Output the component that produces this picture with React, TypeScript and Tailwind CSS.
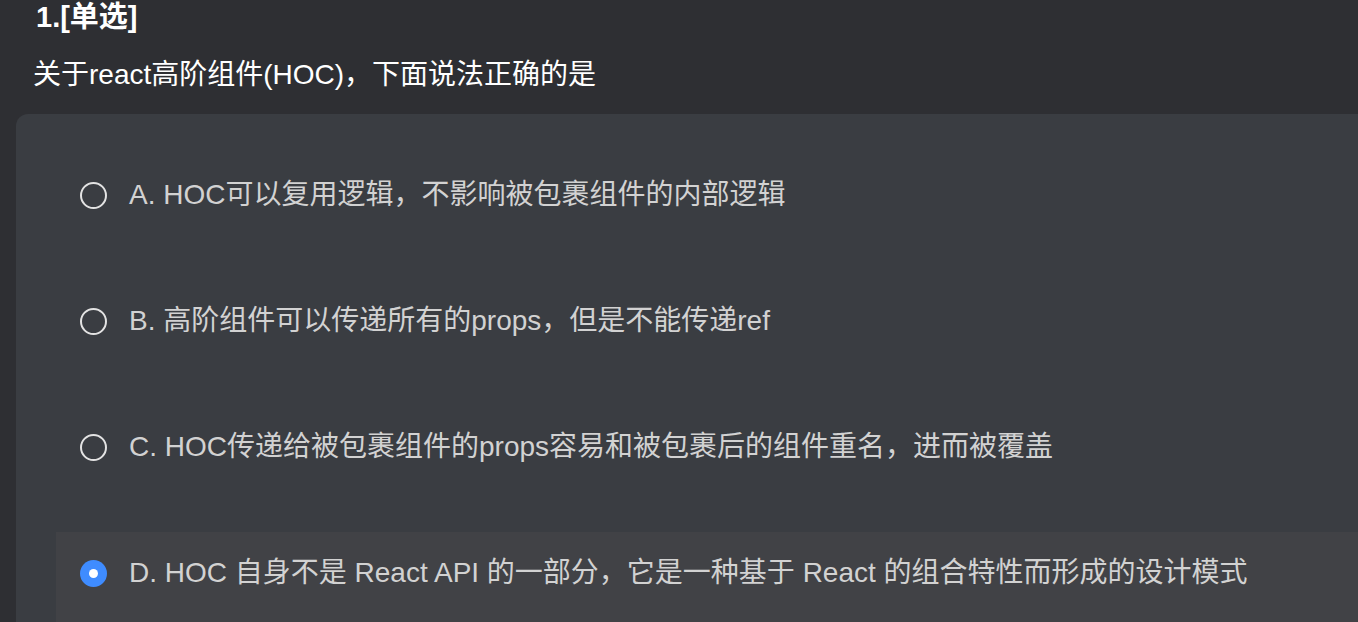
import { useState } from "react";

const options = [
  { key: "A", text: "HOC可以复用逻辑，不影响被包裹组件的内部逻辑" },
  { key: "B", text: "高阶组件可以传递所有的props，但是不能传递ref" },
  { key: "C", text: "HOC传递给被包裹组件的props容易和被包裹后的组件重名，进而被覆盖" },
  { key: "D", text: "HOC 自身不是 React API 的一部分，它是一种基于 React 的组合特性而形成的设计模式" },
];

export default function App() {
  const [picked, setPicked] = useState("D");

  return (
    <div
      className="h-[622px] w-full overflow-hidden bg-[#2e2f33] pl-4"
      style={{ fontFamily: '"Liberation Sans", "Noto Sans CJK SC", sans-serif' }}
    >
      {/* 题目 */}
      <div className="pl-5 text-[29px] font-bold leading-[34px] text-white">1.[单选]</div>
      <div className="pl-[17px] pt-[24px] text-[28px] leading-[34px] text-white">
        关于react高阶组件(HOC)，下面说法正确的是
      </div>

      {/* 选项 */}
      <div className="mt-[22px] flex flex-col gap-[34px] rounded-tl-xl bg-[#3a3d42] pl-10 pt-10 pb-10">
        {options.map((o) => {
          const on = picked === o.key;
          return (
            <div
              key={o.key}
              onClick={() => setPicked(o.key)}
              className={`flex h-[92px] cursor-pointer items-start gap-[22px] pl-6 pt-[28px] ${on ? "bg-[#414246]" : ""}`}
            >
              {on ? (
                <span className="flex h-[27px] w-[27px] shrink-0 items-center justify-center rounded-full bg-[#3f8cff]">
                  <span className="h-[9px] w-[9px] rounded-full bg-white" />
                </span>
              ) : (
                <span className="h-[27px] w-[27px] shrink-0 rounded-full border-2 border-[#e3e3e3]" />
              )}
              <span className="-mt-[4px] whitespace-nowrap text-[28px] leading-[34px] text-[#d2d2d2]">
                {o.key}. {o.text}
              </span>
            </div>
          );
        })}
      </div>
    </div>
  );
}
